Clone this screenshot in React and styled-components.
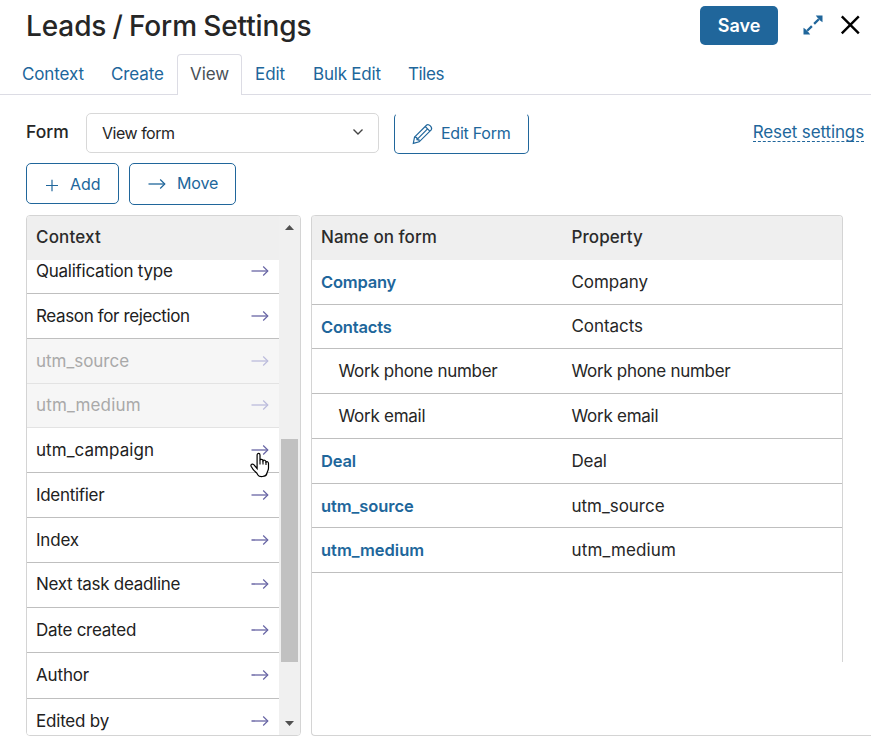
import React from "react";
import styled, { createGlobalStyle } from "styled-components";

const BLUE = "#20669b";

const Global = createGlobalStyle`
  * { box-sizing: border-box; }
  html, body { margin: 0; background: #fff; overflow: hidden; }
  body { font-family: Inter, "Liberation Sans", sans-serif; font-size: 17px; color: #262626; }
  button { font-family: inherit; margin: 0; padding: 0; }
`;

const Page = styled.div`
  width: 871px;
  height: 752px;
  display: flex;
  flex-direction: column;
  overflow: hidden;
`;

const Text = styled.span`
  white-space: nowrap;
  letter-spacing: ${(p) => p.$ls || 0}px;
  transform: translateY(${(p) => p.$dy || 0}px);
`;

const Header = styled.header`
  height: 54px;
  padding: 6px 11px 0 26px;
  display: flex;
  align-items: flex-start;
`;

const Title = styled.h1`
  margin: 0;
  flex: 1;
  font-size: 28px;
  font-weight: 500;
  line-height: 40px;
  letter-spacing: -0.1px;
  word-spacing: -1.2px;
  white-space: nowrap;
`;

const SaveButton = styled.button`
  width: 78px;
  height: 39px;
  border: 0;
  border-radius: 5px;
  background: ${BLUE};
  color: #fff;
  font-size: 18px;
  font-weight: 600;
  margin-right: 25px;
`;

const HeaderIcon = styled.svg`
  width: 20px;
  height: 20px;
  flex: none;
  margin: 9px ${(p) => p.$gap || 0}px 0 0;
`;

const TabBar = styled.nav`
  height: 41px;
  padding-left: 22px;
  display: flex;
  border-bottom: 1px solid #dcdce4;
`;

const Tab = styled.a`
  width: ${(p) => p.$w}px;
  height: 40px;
  line-height: 40px;
  color: ${BLUE};
  letter-spacing: ${(p) => p.$ls}px;
  white-space: nowrap;
`;

const ActiveTab = styled(Tab)`
  height: 41px;
  padding-left: 12px;
  margin-right: 13px;
  line-height: 38px;
  color: #495057;
  background: #fff;
  border: 1px solid #dcdce4;
  border-bottom: 0;
  border-radius: 4px 4px 0 0;
`;

const Controls = styled.div`
  height: 59px;
  padding: 18px 7px 0 26px;
  display: flex;
  align-items: flex-start;
`;

const Label = styled.label`
  width: 60px;
  font-size: 17.5px;
  font-weight: 500;
  line-height: 38px;
`;

const Select = styled.div`
  width: 293px;
  height: 40px;
  margin-right: 15px;
  padding: 0 14px 0 15px;
  display: flex;
  align-items: center;
  justify-content: space-between;
  border: 1px solid #d8d8d8;
  border-radius: 5px;
  font-size: 16px;
`;

const OutlineButton = styled.button`
  width: ${(p) => p.$w}px;
  height: ${(p) => p.$h || 41}px;
  display: flex;
  align-items: center;
  padding-left: ${(p) => p.$pad}px;
  gap: ${(p) => p.$gap}px;
  border: 1px solid ${BLUE};
  border-top-color: ${(p) => (p.$openTop ? "transparent" : BLUE)};
  border-radius: 5px;
  background: #fff;
  color: ${BLUE};
  font-size: 16px;
`;

const ResetLink = styled.a`
  margin-left: auto;
  height: 29px;
  line-height: 38px;
  color: ${BLUE};
  letter-spacing: -0.12px;
  border-bottom: 1px dashed ${BLUE};
  white-space: nowrap;
`;

const Actions = styled.div`
  height: 61px;
  padding: 9px 0 0 26px;
  display: flex;
  align-items: flex-start;
  gap: 10px;
`;

const Panels = styled.main`
  height: 521px;
  padding-left: 26px;
  display: flex;
  gap: 10px;
`;

const ContextPanel = styled.section`
  width: 275px;
  display: flex;
  border: 1px solid #d4d4d4;
  border-radius: 4px;
  overflow: hidden;
`;

const List = styled.div`
  width: 252px;
  height: 519px;
  overflow: hidden;
  color: #212121;
`;

const PanelHead = styled.div`
  height: 44px;
  padding: 0 0 2px 9px;
  display: flex;
  align-items: center;
  background: #efefef;
  font-weight: 500;
  color: #2b2b2b;
`;

const ListRow = styled.div`
  height: ${(p) => p.$h}px;
  padding: 0 10px ${(p) => p.$lift || 0}px 9px;
  display: flex;
  align-items: center;
  justify-content: space-between;
  background: ${(p) => (p.$muted ? "#f6f6f6" : "#fff")};
  border-bottom: 1px solid ${(p) => (p.$muted ? "#e3e3e3" : "#bfbfbf")};
  color: ${(p) => (p.$muted ? "#a9a9a9" : "#212121")};
`;

const ArrowCell = styled.span`
  position: relative;
  width: 18px;
  height: 12px;
  display: block;
  color: ${(p) => (p.$muted ? "#bcbcdc" : "#6865a5")};
`;

const Pointer = styled.svg`
  position: absolute;
  left: -1px;
  top: 8px;
  width: 20px;
  height: 26px;
  z-index: 2;
`;

const Scrollbar = styled.div`
  width: 21px;
  height: 519px;
  padding: 9px 0 9px 2px;
  display: flex;
  flex-direction: column;
  background: #f0f0f0;
`;

const Caret = styled.svg`
  width: 9px;
  height: 5px;
  margin-left: 4px;
  flex: none;
`;

const Track = styled.div`
  flex: 1;
  padding-top: 209px;
`;

const Thumb = styled.div`
  width: 17px;
  height: 223px;
  background: #c1c1c1;
`;

const FormPanel = styled.section`
  width: 560px;
  border-left: 1px solid #d4d4d4;
  border-bottom: 1px solid #d4d4d4;
  border-radius: 4px 0 0 4px;
`;

const Table = styled.div`
  width: 531px;
  height: 447px;
  border-top: 1px solid #d4d4d4;
  border-right: 1px solid #d4d4d4;
  border-radius: 4px 4px 0 0;
  overflow: hidden;
`;

const TableHead = styled(PanelHead)`
  display: grid;
  grid-template-columns: 250.5px 1fr;
`;

const TableRow = styled.div`
  height: ${(p) => p.$h}px;
  padding-left: 9px;
  display: grid;
  grid-template-columns: 250.5px 1fr;
  align-items: center;
  border-bottom: 1px solid #bfbfbf;
`;

const NameLink = styled(Text)`
  color: ${BLUE};
  font-size: 16.5px;
  font-weight: 600;
`;

const ChildName = styled(Text)`
  padding-left: 17.5px;
`;

function Arrow() {
  return (
    <svg width="18" height="12" viewBox="0 0 18 12" fill="none" stroke="currentColor" display="block">
      <path d="M0.5 6H16.7" strokeWidth="1.3" />
      <path d="M12.2 1.5L16.8 6L12.2 10.5" strokeWidth="1.2" />
    </svg>
  );
}

function Hand() {
  return (
    <Pointer viewBox="0 0 20 26">
      <path
        d="M7.1 16.5V3.1C7.1 .9 10 .9 10 3.1V8.2C10.2 6.9 12.7 7 13 8.8C13.5 7.8 15.8 8 16 10C16.7 9.2 18.5 9.6 18.5 11.5V16C18.5 18.5 17.1 19.5 16.9 21.5C16 25.3 9.2 25.2 7.9 23L6.7 21C4.6 19.4 2.2 16.5 1.1 14.2C.4 12.5 2.4 11.4 3.8 12.6L7.1 16.5Z"
        fill="#fff" stroke="#000" strokeWidth="1.2"
      />
      <path d="M10 8V12.5M13 9V12.5M16 10V13" stroke="#000" strokeWidth="1.1" fill="none" />
    </Pointer>
  );
}

const properties = [
  { name: "Qualification type", h: 34, lift: 11, ls: -0.25 },
  { name: "Reason for rejection", h: 45, ls: -0.37 },
  { name: "utm_source", h: 45, ls: -0.02, muted: true },
  { name: "utm_medium", h: 44, ls: 0.16, lift: 2, muted: true },
  { name: "utm_campaign", h: 45, ls: 0.07, hovered: true },
  { name: "Identifier", h: 45, ls: -0.3 },
  { name: "Index", h: 45, ls: -0.2 },
  { name: "Next task deadline", h: 45, ls: -0.28, lift: 2 },
  { name: "Date created", h: 45, ls: -0.25 },
  { name: "Author", h: 46, ls: -0.15, lift: 2 },
  { name: "Edited by", h: 45, ls: -0.2 },
];

const rows = [
  { name: "Company", h: 45, nls: -0.2, ls: -0.07 },
  { name: "Contacts", h: 44, nls: -0.18, ls: -0.05, dy: -1 },
  { name: "Work phone number", h: 45, ls: -0.3, child: true },
  { name: "Work email", h: 45, ls: -0.27, child: true },
  { name: "Deal", h: 45, nls: -0.2, ls: -0.2 },
  { name: "utm_source", h: 44, nls: -0.06, ls: -0.02, dy: -0.5 },
  { name: "utm_medium", h: 45, nls: -0.02, ls: 0.14 },
];

export default function App() {
  return (
    <Page>
      <Global />
      <Header>
        <Title>Leads / Form Settings</Title>
        <SaveButton>Save</SaveButton>
        <HeaderIcon viewBox="0 0 20 20" $gap={17}>
          <path d="M4.2 15.8L8.9 11.1M11.1 8.9L15.8 4.2" stroke={BLUE} strokeWidth="2.3" fill="none" />
          <path d="M12.8 .5H19.5V7.2L17.4 5.7L14.3 2.6ZM.5 12.8V19.5H7.2L5.7 17.4L2.6 14.3Z" fill={BLUE} />
        </HeaderIcon>
        <HeaderIcon viewBox="0 0 20 20">
          <path d="M1.8 1.3L18.8 18.3M18.8 1.3L1.8 18.3" stroke="#000" strokeWidth="2.4" fill="none" />
        </HeaderIcon>
      </Header>
      <TabBar>
        <Tab $w={89} $ls={-0.12}>Context</Tab>
        <Tab $w={66} $ls={-0.11}>Create</Tab>
        <ActiveTab $w={65} $ls={-0.1}>View</ActiveTab>
        <Tab $w={58} $ls={-0.05}>Edit</Tab>
        <Tab $w={95} $ls={-0.21}>Bulk Edit</Tab>
        <Tab $w={50} $ls={-0.4}>Tiles</Tab>
      </TabBar>
      <Controls>
        <Label>Form</Label>
        <Select>
          <Text $ls={-0.48}>View form</Text>
          <svg width="12" height="8" viewBox="0 0 12 8" fill="none" stroke="#444" strokeWidth="1.4">
            <path d="M1.5 0.5L6 5L10.5 0.5" />
          </svg>
        </Select>
        <OutlineButton $w={135} $pad={17} $gap={7} $openTop>
          <svg width="22" height="22" viewBox="0 0 22 22" fill="none" stroke={BLUE} strokeWidth="1.2">
            <path d="M2.5 14.2L14.7 2C16.7 .5 20.9 4.4 19.2 6.8L7.2 18.8L1.3 20.4Z" />
            <path d="M2.5 14.2L4.7 14.5L5 16.6L7 16.8L7.2 18.8M13.2 3.5L17.8 8.1M5.4 16.1L15.3 6.2" />
          </svg>
          <Text $ls={-0.25} $dy={-1}>Edit Form</Text>
        </OutlineButton>
        <ResetLink>Reset settings</ResetLink>
      </Controls>
      <Actions>
        <OutlineButton $w={93} $pad={19} $gap={12}>
          <svg width="12" height="12" viewBox="0 0 12 12" stroke={BLUE} strokeWidth="1.2" transform="translate(0 1.5)">
            <path d="M0 6H12M6 0V12" />
          </svg>
          <Text>Add</Text>
        </OutlineButton>
        <OutlineButton $w={107} $h={42} $pad={18} $gap={11}>
          <Arrow />
          <Text $ls={-0.15} $dy={-1}>Move</Text>
        </OutlineButton>
      </Actions>
      <Panels>
        <ContextPanel>
          <List>
            <PanelHead><Text $ls={0.17}>Context</Text></PanelHead>
            {properties.map((p) => (
              <ListRow key={p.name} $h={p.h} $lift={p.lift} $muted={p.muted}>
                <Text $ls={p.ls}>{p.name}</Text>
                <ArrowCell $muted={p.muted}>
                  <Arrow />
                  {p.hovered && <Hand />}
                </ArrowCell>
              </ListRow>
            ))}
          </List>
          <Scrollbar>
            <Caret viewBox="0 0 9 5"><path d="M0 5L4.5 0L9 5Z" fill="#505050" /></Caret>
            <Track><Thumb /></Track>
            <Caret viewBox="0 0 9 5"><path d="M0 0L4.5 5L9 0Z" fill="#505050" /></Caret>
          </Scrollbar>
        </ContextPanel>
        <FormPanel>
          <Table>
            <TableHead>
              <Text $ls={0.05}>Name on form</Text>
              <Text $ls={0.08}>Property</Text>
            </TableHead>
            {rows.map((r) => (
              <TableRow key={r.name} $h={r.h}>
                {r.child
                  ? <ChildName $ls={r.ls}>{r.name}</ChildName>
                  : <NameLink $ls={r.nls}>{r.name}</NameLink>}
                <Text $ls={r.ls} $dy={r.dy}>{r.name}</Text>
              </TableRow>
            ))}
          </Table>
        </FormPanel>
      </Panels>
    </Page>
  );
}
